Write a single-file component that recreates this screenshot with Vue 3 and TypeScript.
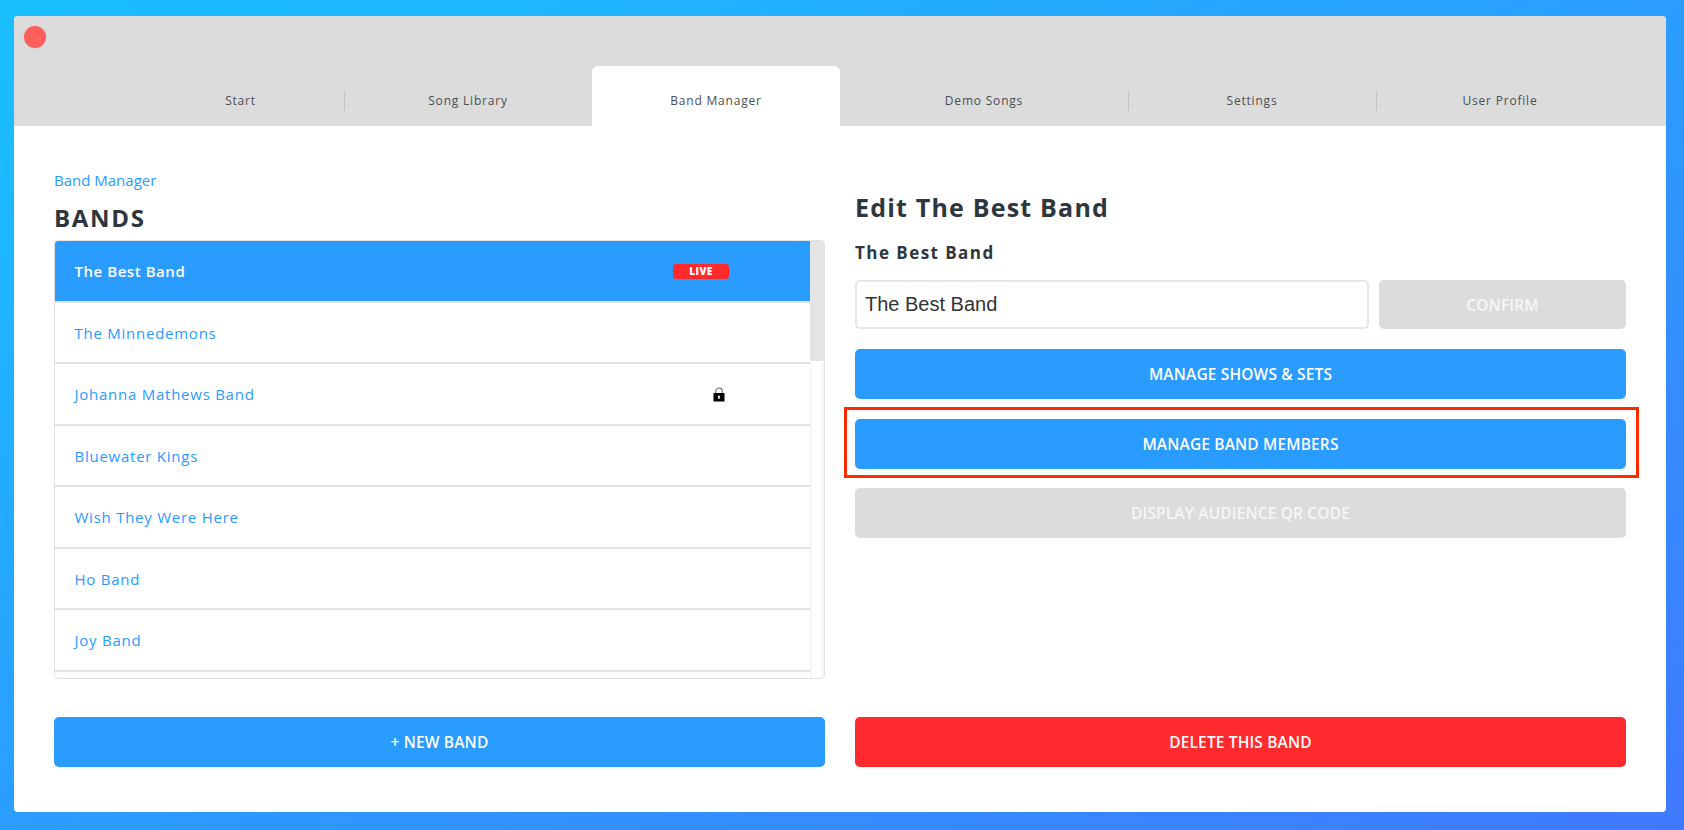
<script setup lang="ts">
interface Band { name: string; active?: boolean; live?: boolean; locked?: boolean }
const tabs = [
  { label: 'Start', cls: 'w-start' },
  { label: 'Song Library', cls: '' },
  { label: 'Band Manager', cls: 'active' },
  { label: 'Demo Songs', cls: 'w-demo' },
  { label: 'Settings', cls: '' },
  { label: 'User Profile', cls: '' },
]
const bands: Band[] = [
  { name: 'The Best Band', active: true, live: true },
  { name: 'The Minnedemons' },
  { name: 'Johanna Mathews Band', locked: true },
  { name: 'Bluewater Kings' },
  { name: 'Wish They Were Here' },
  { name: 'Ho Band' },
  { name: 'Joy Band' },
]
</script>

<template>
  <div class="desktop">
    <div class="window">
      <header class="titlebar">
        <span class="close"></span>
        <nav class="tabs">
          <a v-for="t in tabs" :key="t.label" class="tab" :class="t.cls">{{ t.label }}</a>
        </nav>
      </header>
      <main class="content">
        <section class="col">
          <a class="crumb">Band Manager</a>
          <h2 class="bands-title">BANDS</h2>
          <div class="list">
            <div class="rows">
              <div v-for="b in bands" :key="b.name" class="row" :class="{ selected: b.active }">
                <span class="name">{{ b.name }}</span>
                <span v-if="b.live" class="live">LIVE</span>
                <svg v-if="b.locked" class="lock" width="12" height="15" viewBox="0 0 12 15">
                  <path d="M2.8 7V4.2a3.2 3.2 0 0 1 6.4 0V7" fill="none" stroke="#666" stroke-width="1.1" />
                  <path fill-rule="evenodd" d="M.5 6h11v8.6H.5zM6 8.4a1.1 1.1 0 0 0-.6 2l-.2 1.6h1.6l-.2-1.6a1.1 1.1 0 0 0-.6-2z" fill="#000" />
                </svg>
              </div>
            </div>
            <div class="scrollbar"><div class="thumb"></div></div>
          </div>
          <button class="btn blue new-band">+ NEW BAND</button>
        </section>
        <section class="col">
          <h1 class="edit-title">Edit The Best Band</h1>
          <h3 class="edit-sub">The Best Band</h3>
          <div class="name-row">
            <input class="name-input" value="The Best Band" />
            <button class="btn grey confirm">CONFIRM</button>
          </div>
          <button class="btn blue shows">MANAGE SHOWS &amp; SETS</button>
          <div class="highlight">
            <button class="btn blue">MANAGE BAND MEMBERS</button>
          </div>
          <button class="btn grey qr">DISPLAY AUDIENCE QR CODE</button>
          <button class="btn red delete">DELETE THIS BAND</button>
        </section>
      </main>
    </div>
  </div>
</template>

<style>
html, body { margin: 0; overflow: hidden; }
</style>

<style scoped>
.desktop {
  width: 1684px;
  height: 830px;
  box-sizing: border-box;
  padding: 16px 18px 18px 14px;
  background: linear-gradient(to bottom right, #19c0ff 0%, #2b9dff 50%, #4079ff 100%);
  font-family: "Open Sans", sans-serif;
}
.window {
  height: 100%;
  background: #fff;
  border-radius: 4px;
  overflow: hidden;
  display: flex;
  flex-direction: column;
}
.titlebar {
  position: relative;
  height: 110px;
  background: #dcdcdc;
  display: flex;
  align-items: flex-end;
  flex: none;
}
.close {
  position: absolute;
  left: 10px;
  top: 10px;
  width: 22px;
  height: 22px;
  border-radius: 50%;
  background: #ff5f5b;
  box-shadow: 0 0 0 1px #d5d5d5;
}
.tabs {
  display: flex;
  height: 60px;
  padding-left: 123px;
}
.tab {
  position: relative;
  width: 248px;
  display: flex;
  align-items: center;
  justify-content: center;
  padding-top: 9px;
  box-sizing: border-box;
  font-size: 12px;
  letter-spacing: 0.8px;
  color: #4a4f55;
}
.tab.w-start { width: 207px; }
.tab.w-demo { width: 288px; }
.tab.active {
  background: #fff;
  border-radius: 6px 6px 0 0;
  color: #4a4f55;
}
.tab::after {
  content: "";
  position: absolute;
  right: -1px;
  top: 25px;
  height: 20px;
  width: 1px;
  background: #c4c4c4;
}
.tab:nth-child(2)::after,
.tab.active::after,
.tab:last-child::after { display: none; }
.content {
  flex: 1;
  display: grid;
  grid-template-columns: 771px 771px;
  column-gap: 30px;
  padding: 0 40px;
  min-height: 0;
}
.col {
  display: flex;
  flex-direction: column;
  min-width: 0;
}
.crumb {
  margin-top: 44px;
  font-size: 15px;
  line-height: 20px;
  color: #2a9bff;
}
.bands-title {
  margin: 13px 0 0;
  font-size: 24px;
  line-height: 30px;
  font-weight: 700;
  letter-spacing: 1.7px;
  color: #2e363e;
}
.list {
  margin-top: 7px;
  height: 439px;
  box-sizing: border-box;
  border: 1px solid #e3e3e3;
  border-radius: 4px;
  display: flex;
  overflow: hidden;
  flex: none;
}
.rows {
  flex: 1;
  overflow: hidden;
}
.row {
  height: 61.5px;
  box-sizing: border-box;
  border-bottom: 2px solid #e3e3e3;
  display: flex;
  align-items: center;
  padding-left: 19.5px;
  padding-top: 0.5px;
  font-size: 15px;
  letter-spacing: 0.75px;
  color: #2a9bff;
}
.row.selected {
  background: #2a9bff;
  color: #fff;
  font-weight: 600;
  letter-spacing: 0.55px;
}
.name { flex: 1; }
.live {
  width: 56px;
  height: 15px;
  margin-right: 81px;
  margin-top: 0;
  border-radius: 3px;
  background: #ff2a2d;
  color: #fff;
  font-size: 10px;
  font-weight: 800;
  line-height: 15px;
  text-align: center;
  letter-spacing: 0.5px;
}
.lock { margin-right: 85px; }
.scrollbar {
  width: 14px;
  flex: none;
  box-shadow: inset 3px 0 3px -2px #eee, inset -3px 0 3px -2px #eee;
}
.thumb {
  height: 120px;
  background: #e4e4e4;
  border-radius: 0 0 3px 3px;
}
.btn {
  display: block;
  width: 100%;
  height: 50px;
  flex: none;
  border: 0;
  border-radius: 5px;
  padding: 0;
  font-family: inherit;
  font-size: 15.5px;
  font-weight: 600;
  letter-spacing: 0.15px;
  color: #fff;
}
.btn.blue { background: #2a9bff; }
.btn.grey { background: #dcdcdc; color: #f6f6f6; }
.btn.red { background: #ff2a2d; }
.new-band { margin-top: 38px; }
.edit-title {
  margin: 64px 0 0;
  font-size: 25px;
  line-height: 34px;
  font-weight: 700;
  letter-spacing: 1.2px;
  color: #2e363e;
}
.edit-sub {
  margin: 18px 0 0;
  font-size: 17px;
  line-height: 22px;
  font-weight: 700;
  letter-spacing: 1.45px;
  color: #2e363e;
}
.name-row {
  display: flex;
  gap: 10px;
  margin-top: 16px;
}
.name-input {
  width: 514px;
  height: 49px;
  box-sizing: border-box;
  flex: none;
  border: 2px solid #e6e6e6;
  border-radius: 5px;
  padding: 0 8px;
  font-family: "Liberation Sans", Arial, sans-serif;
  font-size: 20px;
  color: #333;
  outline: none;
}
.confirm {
  width: 247px;
  height: 49px;
}
.shows { margin-top: 20px; }
.highlight {
  margin: 8px -13px 0 -11px;
  padding: 9px 10px 6px 8px;
  border: 3px solid #ff2a00;
}
.qr { margin-top: 10px; }
.delete { margin-top: 179px; }
</style>
